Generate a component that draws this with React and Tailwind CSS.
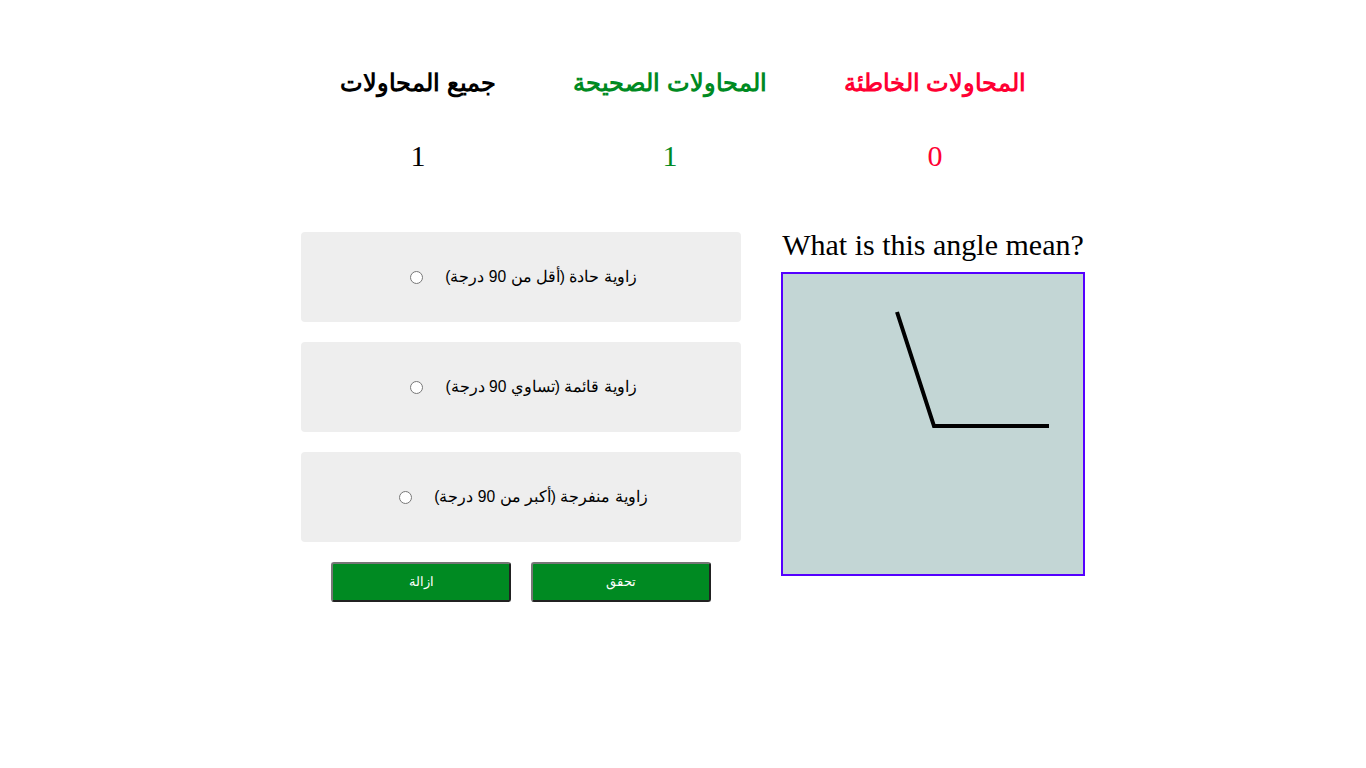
export default function App() {
  const options = [
    "زاوية حادة (أقل من 90 درجة)",
    "زاوية قائمة (تساوي 90 درجة)",
    "زاوية منفرجة (أكبر من 90 درجة)",
  ];
  return (
    <div className="min-h-[768px] w-full bg-white">
      <div className="flex pl-[300px] pt-[60px]" dir="ltr">
        <div className="w-[236px] flex flex-col items-center">
          <div className="h-[46px] flex items-center text-[24px] font-bold text-black font-['Liberation_Sans',sans-serif]" dir="rtl">جميع المحاولات</div>
          <div className="mt-[32px] h-[34px] flex items-center text-[30px] text-black font-['Liberation_Serif',serif]">1</div>
        </div>
        <div className="w-[268px] flex flex-col items-center">
          <div className="h-[46px] flex items-center text-[24px] font-bold text-[#008a22] font-['Liberation_Sans',sans-serif]" dir="rtl">المحاولات الصحيحة</div>
          <div className="mt-[32px] h-[34px] flex items-center text-[30px] text-[#008a22] font-['Liberation_Serif',serif]">1</div>
        </div>
        <div className="w-[262px] flex flex-col items-center">
          <div className="h-[46px] flex items-center text-[24px] font-bold text-[#ff0033] font-['Liberation_Sans',sans-serif]" dir="rtl">المحاولات الخاطئة</div>
          <div className="mt-[32px] h-[34px] flex items-center text-[30px] text-[#ff0033] font-['Liberation_Serif',serif]">0</div>
        </div>
      </div>

      <div className="flex pl-[301px] pt-[60px] gap-[40px]">
        <div className="w-[440px] flex flex-col">
          <div className="flex flex-col gap-[20px]">
            {options.map((o, i) => (
              <label key={i} className="h-[90px] bg-[#eeeeee] rounded-[4px] flex flex-row-reverse items-center justify-center gap-[22px] pl-[5px]">
                <span dir="rtl" className="text-[15.6px] text-black font-['Liberation_Sans',sans-serif]">{o}</span>
                <input type="radio" name="ans" className="w-[13px] h-[13px] m-0" />
              </label>
            ))}
          </div>
          <div className="flex justify-center gap-[20px] mt-[20px]">
            <button className="w-[180px] h-[40px] bg-[#008a22] text-white text-[13px] border-2 border-[#767676] [border-style:outset] rounded-[3px] font-['Liberation_Sans',sans-serif]">ازالة</button>
            <button className="w-[180px] h-[40px] bg-[#008a22] text-white text-[13px] border-2 border-[#767676] [border-style:outset] rounded-[3px] font-['Liberation_Sans',sans-serif]">تحقق</button>
          </div>
        </div>
        <div className="flex flex-col items-center -mt-[4px]">
          <div className="text-[30px] leading-[34px] text-black font-['Liberation_Serif',serif] mb-[10px]">What is this angle mean?</div>
          <div className="w-[304px] h-[304px] border-2 border-[#5500ff] bg-[#c3d6d5]">
            <svg width="300" height="300" viewBox="0 0 300 300">
              <polyline points="114,38 151,152 266,152" fill="none" stroke="black" strokeWidth="4" />
            </svg>
          </div>
        </div>
      </div>
    </div>
  );
}
